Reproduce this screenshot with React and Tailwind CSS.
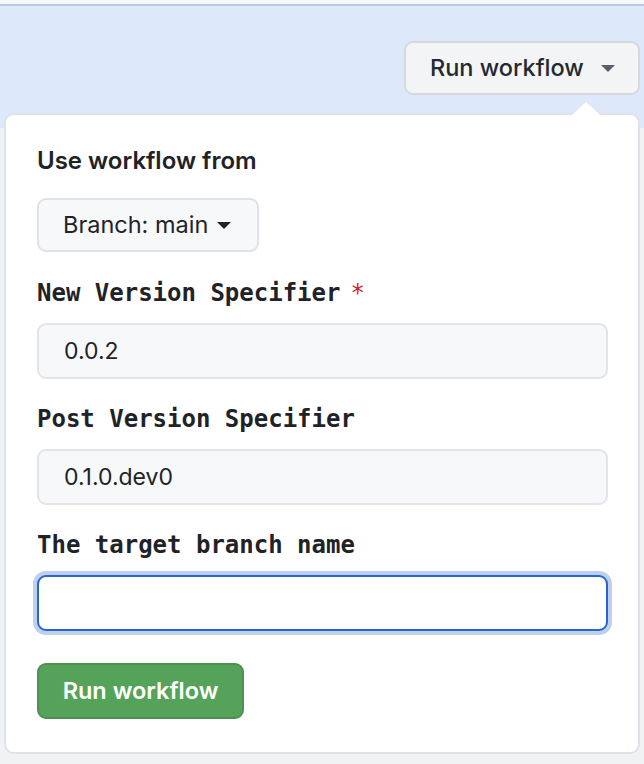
import React from "react";

const sans = "font-['Inter','Liberation_Sans',sans-serif]";
const mono = "font-['DejaVu_Sans_Mono','Liberation_Mono',monospace]";

function Caret({ className }) {
  return (
    <svg viewBox="0 0 14 7" className={className} aria-hidden="true">
      <path d="M0 0h14L7 7z" fill="currentColor" />
    </svg>
  );
}

function Field({ label, required, value, focused }) {
  return (
    <div className="flex flex-col">
      <div className={`${mono} font-bold text-[24px] leading-[32px] text-[#1f2328] flex items-center`}>
        {label}
        {required && <span className="text-[#cf222e] ml-[10px] font-normal">*</span>}
      </div>
      {focused ? (
        <div className="mt-[14px] h-[56px] rounded-[9px] border-2 border-[#2b65cc] bg-white ring-4 ring-[#bdd0f0]" />
      ) : (
        <div className="mt-[14px] h-[56px] rounded-[9px] border-2 border-[#e1e4e8] bg-[#f6f8fa] flex items-center pl-[25px]">
          <span className={`${sans} text-[23px] text-[#1f2328]`}>{value}</span>
        </div>
      )}
    </div>
  );
}

export default function App() {
  return (
    <div className={`${sans} relative w-[644px] h-[764px] overflow-hidden bg-[#f0f2f4]`}>
      <div className="h-[4px] bg-[#f6f8fa] border-b-2 border-[#b6c9e6] box-content" />
      <div className="h-[122px] bg-[#dde9fa] flex justify-end items-start pt-[35px] pr-[4px]">
        <button className="h-[54px] w-[236px] rounded-[9px] border-2 border-[#d5d9de] bg-[#f3f4f6] flex items-center pl-[24px] gap-[17px] text-[#24292f]">
          <span className="text-[23.5px] font-medium">Run workflow</span>
          <Caret className="w-[14px] h-[7px] text-[#57606a]" />
        </button>
      </div>

      {/* dropdown panel */}
      <div className="absolute left-[4px] top-[113px] w-[636px] h-[641px] rounded-[10px] border-2 border-[#dfe3e8] bg-white pt-[30px] pl-[31px] pr-[30px]">
        <div className="absolute -top-[13px] left-[566px] w-0 h-0 border-l-[14px] border-r-[14px] border-b-[13px] border-l-transparent border-r-transparent border-b-white" />
        <div className="text-[24px] leading-[32px] font-semibold text-[#1f2328]">Use workflow from</div>
        <button className="mt-[21px] h-[54px] w-[222px] rounded-[9px] border-2 border-[#dfe2e6] bg-[#f6f8fa] flex items-center pl-[24px] gap-[9px] text-[#1f2328]">
          <span className="text-[23.5px]">Branch: main</span>
          <Caret className="w-[14px] h-[7px] text-[#1f2328]" />
        </button>
        <div className="mt-[25px] flex flex-col gap-[24px]">
          <Field label="New Version Specifier" required value="0.0.2" />
          <Field label="Post Version Specifier" value="0.1.0.dev0" />
          <Field label="The target branch name" focused />
        </div>
        <button className="mt-[32px] h-[56px] w-[207px] rounded-[9px] border-2 border-[#4d9151] bg-[#55a35a] flex items-center justify-center text-white">
          <span className="text-[23.5px] font-semibold">Run workflow</span>
        </button>
      </div>
    </div>
  );
}
